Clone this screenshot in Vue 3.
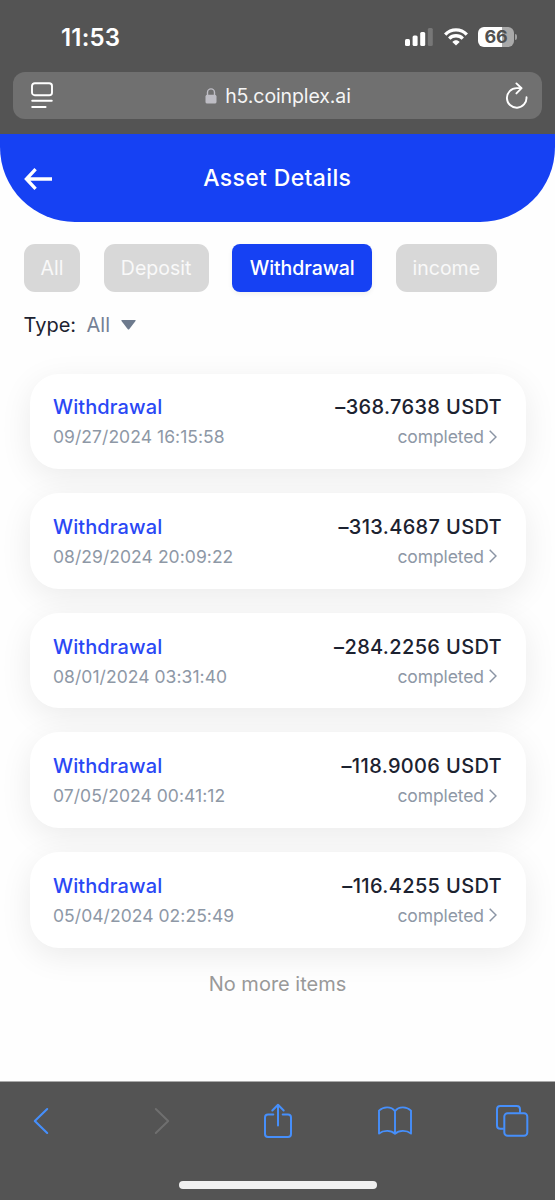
<script setup>
const tabs = [
  { label: 'All', key: 'all' },
  { label: 'Deposit', key: 'deposit' },
  { label: 'Withdrawal', key: 'withdrawal', active: true },
  { label: 'income', key: 'income' },
]

const records = [
  { amount: '–368.7638 USDT', date: '09/27/2024 16:15:58' },
  { amount: '–313.4687 USDT', date: '08/29/2024 20:09:22' },
  { amount: '–284.2256 USDT', date: '08/01/2024 03:31:40' },
  { amount: '–118.9006 USDT', date: '07/05/2024 00:41:12' },
  { amount: '–116.4255 USDT', date: '05/04/2024 02:25:49' },
]
</script>

<template>
  <div class="screen">
    <div class="chrome-top">
      <div class="status">
        <span class="clock">11:53</span>
        <div class="status-icons">
          <svg class="signal" width="28" height="18" viewBox="0 0 28 18" fill="#fff">
            <rect x="0" y="11" width="5" height="7" rx="1.5" />
            <rect x="7.6" y="7.4" width="5" height="10.6" rx="1.5" />
            <rect x="15.2" y="4" width="5" height="14" rx="1.5" />
            <rect x="22.8" y="0" width="5" height="18" rx="1.5" fill="#777" />
          </svg>
          <svg class="wifi" width="24" height="18" viewBox="0 0 24 18" fill="none" stroke="#fff" stroke-width="3.3">
            <path d="M1.2 6.6C7.2 .4 16.8 .4 22.8 6.6" />
            <path d="M5.2 10.6C9 6.8 15 6.8 18.8 10.6" />
            <path d="M8.3 13.9C10.4 11.8 13.6 11.8 15.7 13.9L12 17.6Z" fill="#fff" stroke="none" />
          </svg>
          <div class="battery"><span>66</span><i></i></div>
        </div>
      </div>
      <div class="address">
        <svg class="reader" width="22" height="27" viewBox="0 0 22 27" fill="none" stroke="#fff" stroke-width="1.9" stroke-linecap="round">
          <rect x="1" y="1.2" width="20" height="12" rx="2.8" />
          <path d="M1.2 18.8H20.8M1.2 25H14.6" />
        </svg>
        <div class="host">
          <svg width="12" height="16" viewBox="0 0 12 16">
            <path d="M2.5 8V4.4a3.5 3.5 0 0 1 7 0V8" fill="none" stroke="#bebdc4" stroke-width="1.4" />
            <rect x=".5" y="6.8" width="11" height="8.8" rx="1.7" fill="#bebdc4" />
          </svg>
          <span>h5.coinplex.ai</span>
        </div>
        <svg class="reload" width="24" height="28" viewBox="0 0 24 28" fill="none" stroke="#fff" stroke-width="1.9" stroke-linecap="round" stroke-linejoin="round">
          <path d="M21.5 15.3A9.8 9.8 0 1 1 11.7 6.1H16" />
          <path d="M11.4 1.4L16.6 6.2L11.4 11.4" />
        </svg>
      </div>
    </div>

    <header class="header">
      <svg class="back" width="28" height="22" viewBox="0 0 28 22" fill="none" stroke="#fff" stroke-width="3.3">
        <path d="M28 11H2.4M11.6 1.2L2.4 11L11.6 20.8" />
      </svg>
      <h1>Asset Details</h1>
    </header>

    <nav class="tabs">
      <button v-for="t in tabs" :key="t.key" :class="['tab', t.key, { active: t.active }]">{{ t.label }}</button>
    </nav>

    <div class="filter">
      <span class="filter-label">Type:</span>
      <span class="filter-value">All</span>
      <svg width="15" height="10" viewBox="0 0 15 10"><path d="M.8 0H14.2Q15 .2 14.5 1L8.4 9Q7.5 10 6.6 9L.5 1Q0 .2 .8 0Z" fill="#6d7a8d" /></svg>
    </div>

    <main class="list">
      <article v-for="r in records" :key="r.date" class="card">
        <div class="row">
          <span class="kind">Withdrawal</span>
          <span class="amount">{{ r.amount }}</span>
        </div>
        <div class="row sub">
          <span class="date">{{ r.date }}</span>
          <span class="state">completed
            <svg width="8" height="14" viewBox="0 0 8 14" fill="none" stroke="#8b95a5" stroke-width="1.5"><path d="M.7 .7L7 7L.7 13.3" /></svg>
          </span>
        </div>
      </article>
    </main>
    <p class="end">No more items</p>

    <footer class="toolbar">
      <div class="tools">
        <svg width="16" height="28" viewBox="0 0 16 28" fill="none" stroke="#468ffb" stroke-width="2.1" stroke-linecap="round" stroke-linejoin="round"><path d="M14.2 2L1.8 14L14.2 26" /></svg>
        <svg width="16" height="28" viewBox="0 0 16 28" fill="none" stroke="#6f6f6f" stroke-width="2" stroke-linecap="round" stroke-linejoin="round"><path d="M1.8 2L14.2 14L1.8 26" /></svg>
        <svg width="30" height="36" viewBox="0 0 30 36" fill="none" stroke="#468ffb" stroke-width="2" stroke-linecap="round" stroke-linejoin="round"><path d="M10.3 11.4H5Q2 11.4 2 14.4V31Q2 34 5 34H25Q28 34 28 31V14.4Q28 11.4 25 11.4H19.7M15 22.5V2M9.3 7.5L15 1.8L20.7 7.5" /></svg>
        <svg width="36" height="30" viewBox="0 0 36 30" fill="none" stroke="#468ffb" stroke-width="1.9" stroke-linecap="round" stroke-linejoin="round"><path d="M18 5.2C14-.2 6.2 .6 2 4.6V27.6C6.5 24 14 24 18 27.8C22 24 29.5 24 34 27.6V4.6C29.8 .6 22-.2 18 5.2V27.8" /></svg>
        <svg width="34" height="34" viewBox="0 0 34 34" fill="none" stroke="#468ffb" stroke-width="2" stroke-linejoin="round"><path d="M8.8 24.7H5.3Q2 24.7 2 21.4V5.3Q2 2 5.3 2H21.7Q25 2 25 5.3V8.8" /><rect x="9.3" y="9.3" width="23" height="22.5" rx="3.3" /></svg>
      </div>
      <div class="home"></div>
    </footer>
  </div>
</template>

<style>
body {
  background: #fff;
}
</style>

<style scoped>
.screen {
  width: 555px;
  height: 1200px;
  display: flex;
  flex-direction: column;
  overflow: hidden;
  background: #fefefe;
  font-family: Inter, "Liberation Sans", sans-serif;
  color: #1c2230;
}
.screen * {
  box-sizing: border-box;
}
svg {
  display: block;
  flex: none;
}
.chrome-top {
  height: 133.5px;
  flex: none;
  background: #545454;
}
.status {
  height: 72px;
  padding: 2px 41px 0 61px;
  display: flex;
  align-items: center;
  justify-content: space-between;
  color: #fff;
}
.clock {
  font-size: 24px;
  font-weight: 600;
  letter-spacing: 0.2px;
}
.status-icons {
  display: flex;
  align-items: center;
  gap: 10.3px;
}
.battery {
  position: relative;
  width: 36px;
  height: 20px;
  border-radius: 6px;
  background: linear-gradient(90deg, #fff 67%, #a9a9a9 67%);
  color: #505050;
  font-size: 18px;
  line-height: 20px;
  font-weight: 700;
  letter-spacing: -0.3px;
  text-align: center;
}
.battery i {
  position: absolute;
  right: -3px;
  top: 7px;
  width: 2px;
  height: 6px;
  border-radius: 0 3px 3px 0;
  background: #a0a0a0;
}
.address {
  height: 47px;
  margin: 0 13px;
  padding: 0 13px 0 17.5px;
  display: flex;
  align-items: center;
  justify-content: space-between;
  border-radius: 12px;
  background: #707070;
  color: #fff;
}
.host {
  display: flex;
  align-items: center;
  gap: 8px;
  margin-right: 1.5px;
  font-size: 19.5px;
  letter-spacing: -0.1px;
  color: #f5f5f5;
}
.header {
  height: 88px;
  flex: none;
  display: grid;
  grid-template-columns: 28px 1fr 28px;
  align-items: center;
  padding: 1px 24px 0 23.5px;
  border-radius: 0 0 75px 75px;
  background: #1641f3;
  color: #fff;
}
.back {
  margin-top: 1px;
}
h1 {
  margin: 0;
  text-align: center;
  font-size: 23px;
  font-weight: 450;
  letter-spacing: 0.35px;
}
.tabs {
  display: flex;
  flex: none;
  gap: 23.6px;
  padding: 22.5px 24px 0;
}
.tab {
  height: 47.5px;
  padding: 0;
  border: 0;
  border-radius: 11px;
  background: #d8d8d8;
  color: #f9f9f9;
  font: 400 19.5px Inter, sans-serif;
}
.all { width: 56px; }
.deposit { width: 105px; }
.withdrawal { width: 140px; }
.income { width: 101px; }
.tab.active {
  border-radius: 8px;
  background: #1641f3;
  color: #fff;
  font-weight: 500;
  letter-spacing: -0.05px;
  box-shadow: 0 2px 5px rgba(0, 0, 0, 0.06);
}
.filter {
  display: flex;
  flex: none;
  align-items: center;
  height: 24px;
  margin: 21.5px 23.5px 0;
  font-size: 20px;
}
.filter-label {
  width: 63px;
}
.filter-value {
  width: 34px;
  color: #748196;
  font-weight: 400;
}
.list {
  display: flex;
  flex: none;
  flex-direction: column;
  gap: 24px;
  margin: 36.5px 29.5px 0;
}
.card {
  height: 95.65px;
  padding: 19.75px 23.5px 0;
  border-radius: 29px;
  background: #fff;
  box-shadow: 0 8px 32px rgba(0, 0, 0, 0.08);
}
.row {
  display: flex;
  justify-content: space-between;
  align-items: center;
  height: 28px;
  font-size: 20px;
  font-weight: 500;
  white-space: nowrap;
}
.kind {
  color: #2a48f5;
  letter-spacing: 0.1px;
}
.amount {
  letter-spacing: 0.35px;
}
.sub {
  height: 31px;
  font-size: 17.5px;
  font-weight: 400;
  color: #8e98a6;
}
.date {
  letter-spacing: 0.05px;
}
.state {
  display: flex;
  align-items: center;
  gap: 5px;
  padding-right: 5px;
  letter-spacing: -0.1px;
}
.end {
  margin: 24px 0 0;
  text-align: center;
  font-size: 20px;
  line-height: 25px;
  color: #999;
}
.toolbar {
  height: 119px;
  flex: none;
  margin-top: auto;
  border-top: 1px solid #aaa;
  background: #545454;
}
.tools {
  display: grid;
  grid-template-columns: 82px 160px 71px 164px 70px;
  align-items: center;
  justify-items: center;
  height: 77px;
}
.home {
  width: 198px;
  height: 7.5px;
  margin: 22.3px auto 0;
  border-radius: 4px;
  background: #f0f0f0;
}
</style>
